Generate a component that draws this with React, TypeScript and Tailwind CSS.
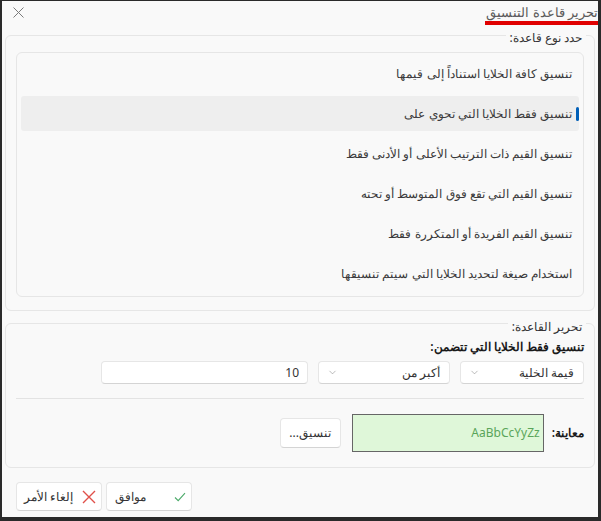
import { ChevronDown } from "lucide-react";

const rules = [
  "تنسيق كافة الخلايا استناداً إلى قيمها",
  "تنسيق فقط الخلايا التي تحوي على",
  "تنسيق القيم ذات الترتيب الأعلى أو الأدنى فقط",
  "تنسيق القيم التي تقع فوق المتوسط أو تحته",
  "تنسيق القيم الفريدة أو المتكررة فقط",
  "استخدام صيغة لتحديد الخلايا التي سيتم تنسيقها",
];

function Select({ label, width }: { label: string; width: string }) {
  return (
    <div
      className={`${width} h-[23px] flex items-center justify-between pr-[9px] pl-[8px] bg-white border border-[#e6e6e6] border-b-[#d4d4d4] rounded-[4px] text-[12px] text-[#333]`}
    >
      <span>{label}</span>
      <ChevronDown className="w-[11px] h-[11px] text-[#888]" strokeWidth={1.25} />
    </div>
  );
}

export default function App() {
  return (
    <div
      dir="rtl"
      className="w-[601px] h-[521px] flex flex-col bg-[#f9f9f9] border-l-2 border-r-[3px] border-b-[4px] border-t border-[#2a2a2a] font-['Noto_Sans',sans-serif] text-[#333] overflow-hidden"
    >
      {/* Title bar */}
      <div className="h-[23px] flex items-start justify-between">
        <span className="pt-[2px] leading-[18px] text-[13px] text-[#5a5a5a] border-b-[4px] border-[#e00000] pl-[1px]">
          تحرير قاعدة التنسيق
        </span>
        <svg className="ml-[11px] mt-[6px]" width="11" height="11" viewBox="0 0 11 11">
          <path d="M0.5 0.5 L10.5 10.5 M10.5 0.5 L0.5 10.5" stroke="#7a7a7a" strokeWidth="1" fill="none" />
        </svg>
      </div>

      {/* Rule type */}
      <fieldset className="mx-[3px] border border-[#e6e6e6] rounded-[6px] px-[10px] pb-[13px] pt-[6px]">
        <legend className="-mr-[2px] px-[4px] pt-[6px] leading-[16px] text-[12px] text-[#333]">
          حدد نوع قاعدة:
        </legend>
        <div className="border border-[#e6e6e6] rounded-[6px] bg-[#f9f9f9] pt-[3px] pb-[5px] px-[4px] flex flex-col gap-[5px]">
          {rules.map((r, i) => (
            <div
              key={r}
              className={`h-[35px] flex items-center pr-[7px] text-[12px] text-[#3a3a3a] rounded-[3px] ${
                i === 1 ? "bg-[#eeeeee] relative" : ""
              }`}
            >
              {i === 1 && (
                <span className="absolute right-0 top-[11px] w-[3px] h-[14px] rounded-full bg-[#005fb8]" />
              )}
              {r}
            </div>
          ))}
        </div>
      </fieldset>

      {/* Edit rule */}
      <fieldset className="mx-[3px] mt-[1px] border border-[#e6e6e6] rounded-[6px] px-[10px] pb-[15px] pt-[4px]">
        <legend className="-mr-[2px] px-[4px] pt-[7px] leading-[16px] text-[12px] text-[#333]">
          تحرير القاعدة:
        </legend>
        <div className="leading-[16px] text-[12px] font-semibold text-[#1a1a1a]">
          تنسيق فقط الخلايا التي تتضمن:
        </div>
        <div className="mt-[6px] flex gap-[10px]">
          <Select label="قيمة الخلية" width="w-[124px]" />
          <Select label="أكبر من" width="w-[132px]" />
          <div className="w-[207px] h-[23px] flex items-center pr-[8px] bg-white border border-[#e6e6e6] border-b-[#d4d4d4] rounded-[4px] text-[12px] text-[#333]">
            10
          </div>
        </div>
        <div className="mt-[14px] h-px bg-[#e3e3e3]" />
        <div className="mt-[15px] flex items-center">
          <span className="text-[12px] font-semibold text-[#1a1a1a]">معاينة:</span>
          <div className="mr-[8px] w-[192px] h-[38px] flex items-center pr-[3px] bg-[#dff7d9] border border-[#666] text-[12px] text-[#5aa55a]">
            AaBbCcYyZz
          </div>
          <button className="mr-[11px] w-[61px] h-[30px] bg-white border border-[#e6e6e6] border-b-[#d4d4d4] rounded-[4px] text-[12px] text-[#333]">
            تنسيق...
          </button>
        </div>
      </fieldset>

      {/* Footer */}
      <div className="mt-[14px] flex justify-end gap-[4px] pl-[14px]">
        <button className="w-[86px] h-[29px] flex items-center gap-[10px] pr-[5px] bg-white border border-[#e6e6e6] border-b-[#d4d4d4] rounded-[4px] text-[12px] text-[#333]">
          <svg width="12" height="10" viewBox="0 0 12 10">
            <path d="M1 5.5 L4.2 8.6 L11 1.2" stroke="#4caa6a" strokeWidth="1.1" fill="none" />
          </svg>
          <span className="mr-[18px]">موافق</span>
        </button>
        <button className="w-[86px] h-[29px] flex items-center gap-[9px] pr-[5px] bg-white border border-[#e6e6e6] border-b-[#d4d4d4] rounded-[4px] text-[12px] text-[#333]">
          <svg width="14" height="14" viewBox="0 0 14 14">
            <path d="M1 1 L13 13 M13 1 L1 13" stroke="#e0504a" strokeWidth="1.4" fill="none" />
          </svg>
          <span>إلغاء الأمر</span>
        </button>
      </div>
    </div>
  );
}
